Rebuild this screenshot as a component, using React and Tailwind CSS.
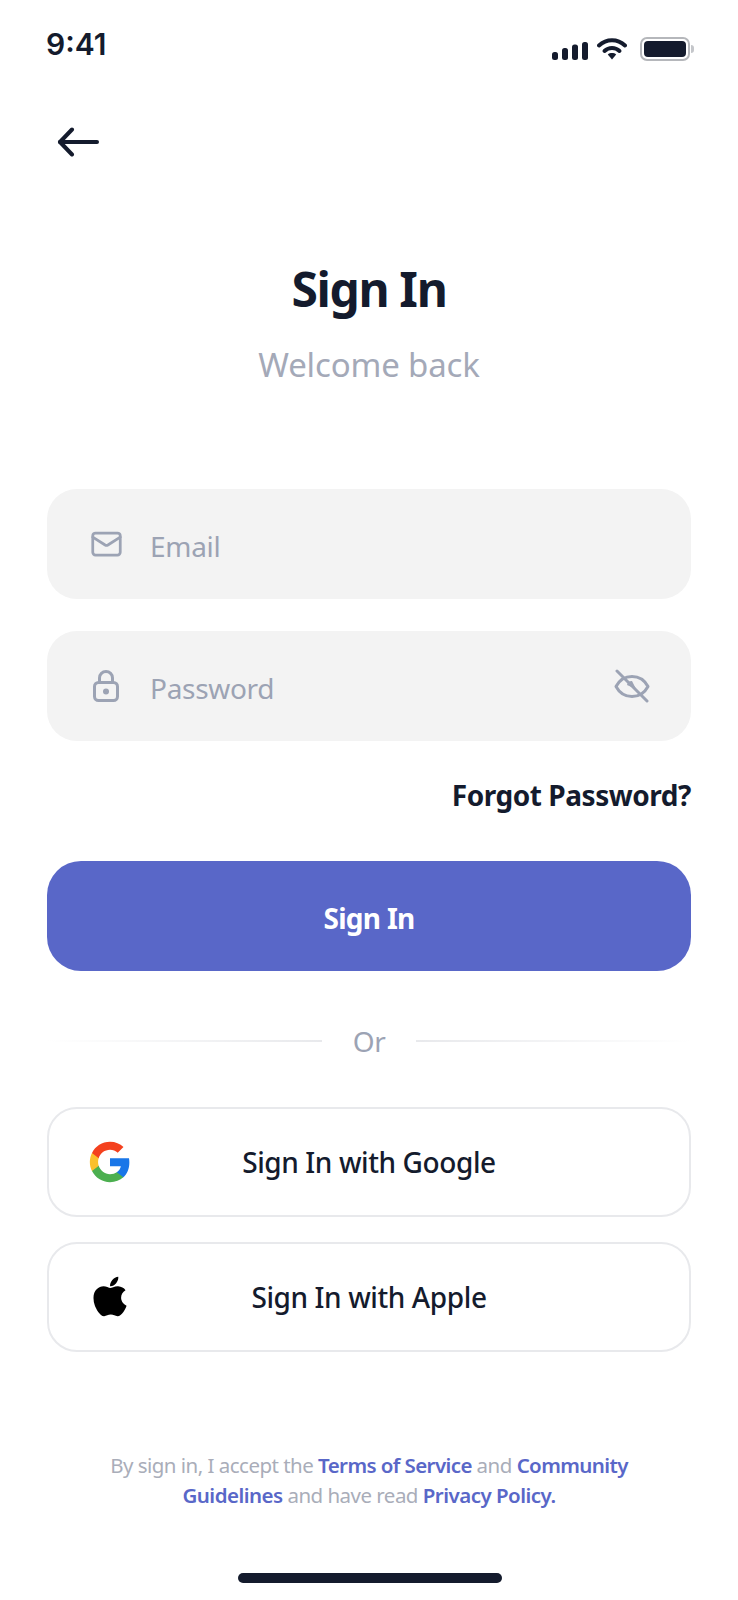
import { Mail } from "lucide-react";
import { FaApple } from "react-icons/fa";

const font = { fontFamily: '"Noto Sans", sans-serif' };

function StatusBar() {
  return (
    <div className="flex h-[88px] items-start justify-between pl-[46px] pr-[44px]">
      <span className="mt-[24px] text-[30px] leading-[40px] font-semibold text-[#141b2d] [font-family:Inter,sans-serif]">9:41</span>
      <div className="mt-[37px] flex items-end gap-[9px]">
        <svg width="36" height="18" viewBox="0 0 36 18" className="mb-[1px] ml-[1px] fill-[#141b2d]">
          <rect x="0" y="10" width="6" height="8" rx="2.5" />
          <rect x="10" y="6" width="6" height="12" rx="2.5" />
          <rect x="20" y="2.500" width="6" height="15.500" rx="2.500" />
          <rect x="30" y="0" width="6" height="18" rx="2.5" />
        </svg>
        <svg width="30" height="23" viewBox="0 0 30 23" fill="none" className="mb-[1px] mr-[4px]">
          <path d="M2 8.5C9.5 1.5 20.5 1.5 28 8.5" stroke="#141b2d" strokeWidth="4" strokeLinecap="round" />
          <path d="M7.5 14C11.8 10 18.2 10 22.5 14" stroke="#141b2d" strokeWidth="4" strokeLinecap="round" />
          <path d="M10.8 17.5C13 15.6 17 15.6 19.2 17.5L15 22.5Z" fill="#141b2d" />
        </svg>
        <div className="flex items-center">
          <div className="flex h-[24px] w-[50px] items-center justify-center rounded-[7px] border-2 border-[#b5b7bb]">
            <div className="h-[16px] w-[42px] rounded-[4px] bg-[#141b2d]" />
          </div>
          <div className="ml-[1px] h-[8px] w-[3px] rounded-r-full bg-[#c4c6ca]" />
        </div>
      </div>
    </div>
  );
}

function LockIcon() {
  return (
    <svg width="26" height="32" viewBox="0 0 26 32" fill="none" stroke="#9ca3b4" strokeWidth="3" className="-mt-[1px] -ml-[2px]">
      <rect x="1.5" y="12.5" width="23" height="18" rx="4" />
      <path d="M6.5 12V8a6.5 6.5 0 0 1 13 0v4" />
      <circle cx="13" cy="21.5" r="3" fill="#9ca3b4" stroke="none" />
    </svg>
  );
}

function EyeOffIcon() {
  return (
    <svg width="36" height="34" viewBox="0 0 36 34" fill="none" stroke="#9ca3b4" strokeWidth="3" strokeLinecap="round" strokeLinejoin="round">
      <path d="M2 17.5C6 10 11.500 7.500 18 7.500S30 10 34 17.500C30 25 24.500 27.500 18 27.500S6 25 2 17.500Z" />
      <path d="M3 2L33 32" />
      <path d="M13 16a5 5 0 0 1 5-4l4 8z" fill="#9ca3b4" stroke="none" />
    </svg>
  );
}

function GoogleIcon() {
  return (
    <svg width="44" height="44" viewBox="0 0 24 24">
      <path fill="#1976e8" d="M22.56 12.25c0-.78-.07-1.53-.2-2.25H12v4.26h5.92c-.26 1.37-1.04 2.53-2.21 3.31v2.77h3.57c2.08-1.92 3.28-4.74 3.28-8.09z" />
      <path fill="#4caf50" d="M12 23c2.97 0 5.46-.98 7.28-2.66l-3.57-2.77c-.98.66-2.23 1.06-3.71 1.06-2.86 0-5.29-1.93-6.16-4.53H2.18v2.84C3.99 20.53 7.7 23 12 23z" />
      <path fill="#fbc02d" d="M5.84 14.09c-.22-.66-.35-1.36-.35-2.09s.13-1.43.35-2.09V7.07H2.18C1.43 8.55 1 10.22 1 12s.43 3.45 1.18 4.93l2.85-2.22.81-.62z" />
      <path fill="#f4411e" d="M12 5.38c1.62 0 3.06.56 4.21 1.64l3.15-3.15C17.45 2.09 14.97 1 12 1 7.7 1 3.99 3.47 2.18 7.07l3.66 2.84c.87-2.6 3.3-4.53 6.16-4.53z" />
    </svg>
  );
}

function Field({ icon, label, right }) {
  return (
    <div className="flex h-[110px] items-center rounded-[30px] bg-[#f3f3f3] pl-[43px] pr-[41px]">
      <div className="flex w-[33px] justify-center">{icon}</div>
      <span className="ml-[27px] flex-1 pt-[3px] text-[28px] leading-[38px] tracking-[-0.3px] text-[#9ca3b4]">{label}</span>
      {right}
    </div>
  );
}

function SocialButton({ icon, label }) {
  return (
    <div className="relative flex h-[110px] items-center justify-center rounded-[30px] border-2 border-[#e8e9ec] bg-white">
      <div className="absolute left-[39px] flex h-[44px] w-[44px] items-center justify-center">{icon}</div>
      <span className="text-[28px] leading-[38px] font-medium tracking-[-0.4px] text-[#141b2d]">{label}</span>
    </div>
  );
}

export default function App() {
  return (
    <div className="flex h-[1600px] w-[738px] flex-col overflow-hidden bg-white" style={font}>
      <StatusBar />

      <div className="mt-[12px] flex h-[56px] items-center pl-[56px] pt-[28px]">
        <svg width="44" height="30" viewBox="0 0 44 30" fill="none" stroke="#141b2d" strokeWidth="4" strokeLinecap="round" strokeLinejoin="round">
          <path d="M41 15H4" />
          <path d="M16 2.500L4 15l12 12.500" />
        </svg>
      </div>

      <h1 className="mt-[100px] text-center text-[48px] leading-[65px] font-bold tracking-[-1.4px] text-[#141b2d]">Sign In</h1>
      <p className="mt-[22px] text-center text-[33px] leading-[44px] tracking-[-0.15px] text-[#a4a9b8]">Welcome back</p>

      <div className="mt-[102px] flex flex-col px-[47px]">
        <div className="flex flex-col gap-[32px]">
          <Field icon={<Mail size={40} strokeWidth={2} color="#9ca3b4" />} label="Email" />
          <Field icon={<LockIcon />} label="Password" right={<EyeOffIcon />} />
        </div>

        <div className="mt-[35px] text-right text-[28px] leading-[38px] font-bold tracking-[-0.45px] text-[#141b2d]">Forgot Password?</div>

        <div className="mt-[47px] flex h-[110px] items-center justify-center rounded-[34px] bg-[#5967c8] pt-[3px] text-[28px] leading-[38px] font-bold tracking-[-0.7px] text-white">
          Sign In
        </div>

        <div className="mt-[51px] flex h-[38px] items-center">
          <div className="h-[2px] flex-1 bg-gradient-to-r from-white to-[#e8e9ec]" />
          <span className="w-[94px] text-center text-[28px] leading-[38px] tracking-[-0.5px] text-[#9ca3b4]">Or</span>
          <div className="h-[2px] flex-1 bg-gradient-to-l from-white to-[#e8e9ec]" />
        </div>

        <div className="mt-[47px] flex flex-col gap-[25px]">
          <SocialButton icon={<GoogleIcon />} label="Sign In with Google" />
          <SocialButton icon={<FaApple size={45} color="#000" className="-mt-[1px]" />} label="Sign In with Apple" />
        </div>

        <p className="mt-[98px] text-center text-[20.5px] leading-[30px] tracking-[-0.52px] text-[#a9adb9]">
          By sign in, I accept the <span className="font-semibold tracking-[-0.6px] text-[#5967c8]">Terms of Service</span> and <span className="font-semibold tracking-[-0.6px] text-[#5967c8]">Community</span>
          <br />
          <span className="font-semibold text-[#5967c8]">Guidelines</span> and have read <span className="font-semibold text-[#5967c8]">Privacy Policy.</span>
        </p>
      </div>

      <div className="mt-auto mb-[17px] ml-[2px] h-[10px] w-[264px] self-center rounded-full bg-[#141b2d]" />
    </div>
  );
}
